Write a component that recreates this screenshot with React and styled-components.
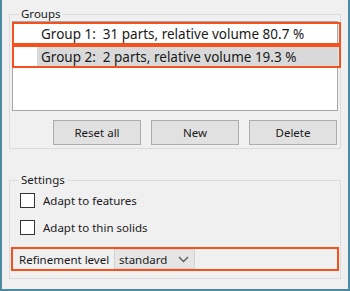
import React from "react";
import styled, { createGlobalStyle } from "styled-components";

const GlobalStyle = createGlobalStyle`
  html,
  body {
    margin: 0;
    padding: 0;
    background: #f0f0f0;
  }

  body {
    font-family: "Noto Sans", "Liberation Sans", sans-serif;
    color: #1a1a1a;
  }
`;

const Window = styled.div`
  width: 350px;
  height: 291px;
  box-sizing: border-box;
  background: #f0f0f0;
  border: 2px solid #4a8ba3;
  border-top: none;
  padding: 0 7px;
  display: flex;
  flex-direction: column;
`;

const GroupBox = styled.fieldset`
  margin: ${(props) => props.top}px 0 0 0;
  padding: 0 2px ${(props) => props.bottom}px 2px;
  border: 1px solid #dcdcdc;
  min-width: 0;
  display: flex;
  flex-direction: column;
`;

const Legend = styled.legend`
  margin-left: 7px;
  padding: 0 2px;
  font-size: 11.5px;
  line-height: 14px;
`;

const List = styled.div`
  height: 88px;
  background: #fff;
  border: 1px solid #a8a8a8;
  display: flex;
  flex-direction: column;
`;

const Row = styled.div`
  height: 23px;
  box-sizing: border-box;
  margin: 0 -4px 0 -1px;
  border: 2px solid #f4511e;
  display: flex;
  font-size: 13.5px;
`;

const Cell = styled.div`
  flex: 1;
  margin: 0 1px 0 23px;
  padding-left: 4px;
  display: flex;
  align-items: center;
  white-space: pre;
  background: ${(props) => (props.selected ? "#d9d9d9" : "transparent")};
`;

const ButtonBar = styled.div`
  margin-top: 9px;
  padding-right: 1px;
  display: flex;
  justify-content: flex-end;
  gap: 10px;
`;

const Button = styled.button`
  width: 88px;
  height: 25px;
  padding: 0;
  background: #e1e1e1;
  border: 1px solid #adadad;
  font-family: inherit;
  font-size: 11.5px;
  color: #1a1a1a;
`;

const CheckRow = styled.label`
  height: 27px;
  padding-left: 8px;
  display: flex;
  align-items: center;
  gap: 8px;
  font-size: 11.5px;
`;

const Box = styled.span`
  width: 13px;
  height: 13px;
  background: #fff;
  border: 1px solid #333;
`;

const FieldRow = styled.div`
  height: 24px;
  box-sizing: border-box;
  margin: 6px -1px 0 -1px;
  border: 2px solid #f4511e;
  display: flex;
  align-items: stretch;
  font-size: 11.5px;
  white-space: nowrap;
`;

const FieldLabel = styled.span`
  width: 101px;
  box-sizing: border-box;
  padding-left: 6px;
  display: flex;
  align-items: center;
`;

const Combo = styled.div`
  width: 81px;
  box-sizing: border-box;
  padding: 0 5px 0 4px;
  background: #e5e5e5;
  border: 1px solid #d2d2d2;
  display: flex;
  align-items: center;
  justify-content: space-between;
`;

const Chevron = () => (
  <svg width="11" height="7" viewBox="0 0 11 7">
    <path d="M1 1 L5.5 5.5 L10 1" fill="none" stroke="#5a5a5a" strokeWidth="1.3" />
  </svg>
);

const groups = [
  { id: 1, text: "Group 1:  31 parts, relative volume 80.7 %" },
  { id: 2, text: "Group 2:  2 parts, relative volume 19.3 %", selected: true },
];

const App = () => (
  <>
    <GlobalStyle />
    <Window>
      <GroupBox top={7} bottom={3}>
        <Legend>Groups</Legend>
        <List>
          {groups.map((g) => (
            <Row key={g.id}>
              <Cell selected={g.selected}>{g.text}</Cell>
            </Row>
          ))}
        </List>
        <ButtonBar>
          <Button>Reset all</Button>
          <Button>New</Button>
          <Button>Delete</Button>
        </ButtonBar>
      </GroupBox>

      <GroupBox top={24} bottom={7}>
        <Legend>Settings</Legend>
        <CheckRow>
          <Box />
          Adapt to features
        </CheckRow>
        <CheckRow>
          <Box />
          Adapt to thin solids
        </CheckRow>
        <FieldRow>
          <FieldLabel>Refinement level</FieldLabel>
          <Combo>
            standard
            <Chevron />
          </Combo>
        </FieldRow>
      </GroupBox>
    </Window>
  </>
);

export default App;
